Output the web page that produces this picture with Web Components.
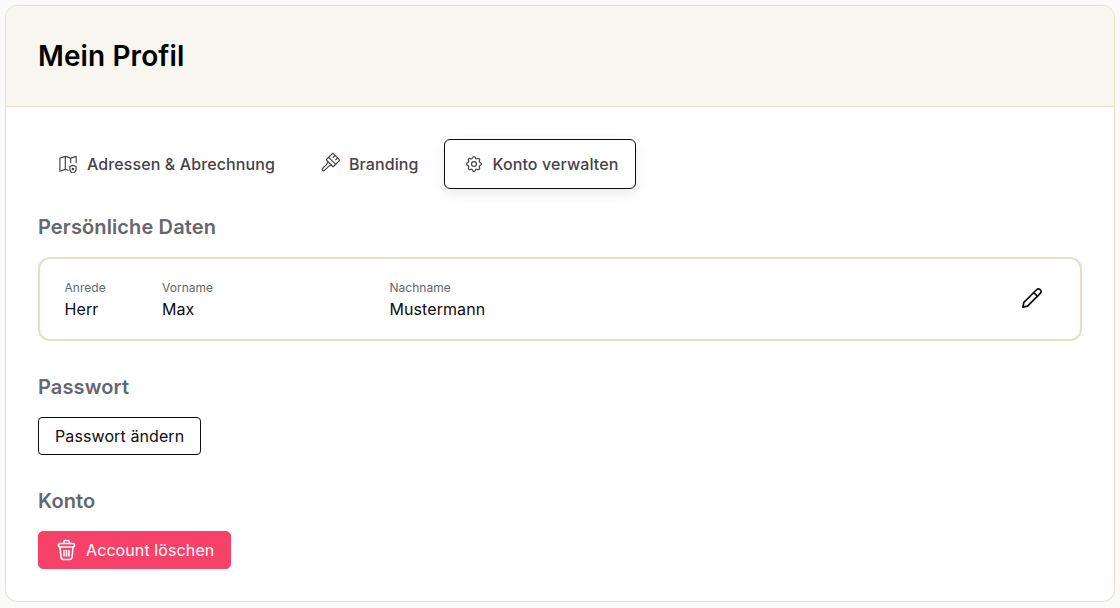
<!DOCTYPE html>
<html lang="de"><head><meta charset="utf-8"><style>
html,body{margin:0;padding:0;background:#fafaf8;font-family:Inter,"Liberation Sans",sans-serif}
body{padding:5px;height:608px;box-sizing:border-box}
</style></head><body>
<profile-card heading="Mein Profil">
  <tab-bar>
    <tab-item><svg viewBox="2 2 20 20" style="stroke-width:1.300"><path d="M9 3.500 3 5.500v14.500l6-2 3 1M9 3.500l6 2 6-2v7M9 3.500V18M15 5.500v5"/><path d="M17.500 22.500s3.500-1.500 3.500-4.700v-3l-3.500-1.300-3.500 1.300v3c0 3.200 3.500 4.700 3.500 4.700z"/><circle cx="17.500" cy="17.500" r=".8"/></svg>Adressen &amp; Abrechnung</tab-item>
    <tab-item><svg viewBox="0 0 20 20" style="overflow:visible;margin-left:-1px;margin-right:1px;stroke-width:1.300"><g transform="rotate(45 10 10)"><path d="M4.500-1.500h11v9.500a1 1 0 0 1-1 1H5.500a1 1 0 0 1-1-1z"/><path d="M4.500 5h11"/><path d="M7.500 9l1 3.500v6a1.500 1.500 0 0 0 3 0v-6l1-3.500"/><path d="M8-1.500v3M12-1.500v3"/></g></svg>Branding</tab-item>
    <tab-item active><svg viewBox="1 1 22 22"><path d="M10.300 4.300c.4-1.800 3-1.800 3.400 0a1.700 1.700 0 0 0 2.600 1.100c1.500-1 3.300.8 2.400 2.400a1.700 1.700 0 0 0 1 2.500c1.800.4 1.800 3 0 3.400a1.700 1.700 0 0 0-1 2.600c.9 1.500-.9 3.300-2.400 2.400a1.700 1.700 0 0 0-2.600 1c-.4 1.800-3 1.800-3.400 0a1.700 1.700 0 0 0-2.600-1c-1.500.9-3.300-.9-2.400-2.400a1.700 1.700 0 0 0-1-2.600c-1.800-.4-1.800-3 0-3.400a1.700 1.700 0 0 0 1-2.500c-.9-1.600.9-3.400 2.400-2.400 1 .6 2.300.1 2.600-1.100z"/><circle cx="12" cy="12" r="3"/></svg>Konto verwalten</tab-item>
  </tab-bar>
  <section-title style="margin-top:26px">Persönliche Daten</section-title>
  <data-box>
    <data-field label="Anrede" value="Herr" style="width:97.500px"></data-field>
    <data-field label="Vorname" value="Max" style="width:227.500px"></data-field>
    <data-field label="Nachname" value="Mustermann"></data-field>
  </data-box>
  <section-title style="margin-top:34px">Passwort</section-title>
  <action-button style="margin-top:18px">Passwort ändern</action-button>
  <section-title style="margin-top:34px">Konto</section-title>
  <action-button danger style="margin-top:18px"><svg viewBox="0 0 24 24"><path d="M5 9 6 19.500A2.500 2.500 0 0 0 8.500 21.500h6a2.500 2.500 0 0 0 2.500-2L18 9M8 5.500l1.500-3h4l1.500 3M9 12.500v5.500M11.500 12.500v5.500M14 12.500v5.500"/><rect x="3.500" y="5.500" width="16" height="3.500" rx="1.700"/></svg>Account löschen</action-button>
</profile-card>
<script>
function def(name, html){
  customElements.define(name, class extends HTMLElement{
    connectedCallback(){
      if(this.shadowRoot) return;
      const r=this.attachShadow({mode:'open'});
      r.innerHTML=typeof html==='function'?html(this):html;
    }
  });
}
def('profile-card', el=>`<style>
:host{display:block;height:597px;box-sizing:border-box;border:1px solid #e5dfc9;border-radius:12px;background:#fff;overflow:hidden}
header{height:101px;box-sizing:border-box;background:#f7f6ef;border-bottom:1px solid #e5dfc9;padding:0 32px;display:flex;align-items:center}
h1{margin:0;font-size:28px;font-weight:600;line-height:36px;letter-spacing:.1px;color:#000}
main{padding:32px 32px 0}
</style><header><h1>${el.getAttribute('heading')}</h1></header><main><slot></slot></main>`);
def('tab-bar',`<style>:host{display:flex;gap:7px}</style><slot></slot>`);
def('tab-item',`<style>
:host{display:flex;align-items:center;gap:10px;height:50px;box-sizing:border-box;padding:0 17px 0 20px;border:1px solid transparent;border-radius:6px;font-size:16px;font-weight:500;letter-spacing:.1px;color:#45434a;white-space:nowrap}
:host([active]){border-color:#0b0b12;box-shadow:0 4px 14px rgba(0,0,0,.09)}
::slotted(svg){width:18px;height:18px;fill:none;stroke:#45434a;stroke-width:1.500;stroke-linecap:round;stroke-linejoin:round;flex:none}
</style><slot></slot>`);
def('section-title',`<style>:host{display:block;font-size:20px;font-weight:600;line-height:24px;letter-spacing:.12px;color:#64676d}</style><slot></slot>`);
def('data-box',`<style>
:host{display:flex;align-items:center;box-sizing:border-box;height:84px;margin-top:18px;padding:0 37px 0 24.500px;border:2px solid #e5dfc9;border-radius:12px}
svg{margin-left:auto;width:24px;height:24px;fill:none;stroke:#0b0b12;stroke-width:1.700;stroke-linecap:round;stroke-linejoin:round;overflow:visible}
</style><slot></slot><svg viewBox="0 0 24 24"><g transform="rotate(45 12 12)"><path d="M9.400 1.500a2.600 2.600 0 0 1 5.200 0v18l-2.600 4-2.600-4z"/><path d="M9.400 5.500h5.200"/></g></svg>`);
def('data-field',el=>`<style>
:host{display:block;flex:none;padding-top:2px}
.l{font-size:12px;line-height:16px;letter-spacing:.03px;color:#64666b}
.v{font-size:16px;line-height:24px;letter-spacing:.08px;margin-top:1px;color:#0b0b12}
</style><div class="l">${el.getAttribute('label')}</div><div class="v">${el.getAttribute('value')}</div>`);
def('action-button',`<style>
:host{display:flex;width:max-content;align-items:center;gap:7px;height:38px;box-sizing:border-box;padding:0 16px;border:1px solid #0b0b12;border-radius:4px;font-size:16px;letter-spacing:.1px;color:#0b0b12;background:#fff}
:host([danger]){background:#f64269;border-color:#f64269;color:#fff;border-radius:5px}
::slotted(svg){width:24px;height:24px;fill:none;stroke:#fff;stroke-width:1.600;stroke-linecap:round;stroke-linejoin:round;flex:none}
</style><slot></slot>`);
</script>
</body></html>
